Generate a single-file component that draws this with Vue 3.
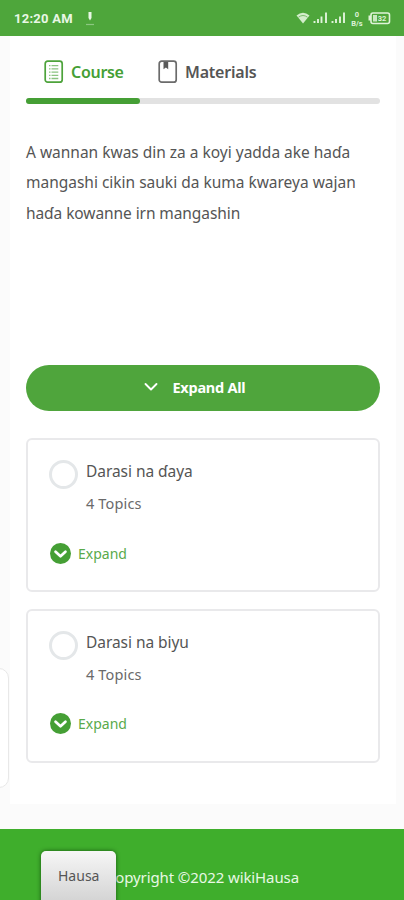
<script setup>
const description = [
  { text: 'A wannan ƙwas din za a koyi yadda ake haɗa', cls: 'l1' },
  { text: 'mangashi cikin sauki da kuma ƙwareya wajan', cls: 'l2' },
  { text: 'haɗa kowanne irn mangashin', cls: 'l3' },
]
const lessons = [
  { title: 'Darasi na ɗaya', topics: '4 Topics' },
  { title: 'Darasi na biyu', topics: '4 Topics' },
]
</script>

<template>
  <div class="screen">
    <header class="status">
      <span class="time">12:20 AM</span>
      <svg class="download" width="10" height="16" viewBox="0 0 10 16">
        <path d="M3.500 1h3v6L5 9.500 3.500 7z" fill="#e9f7e5" />
        <path d="M1 13.500h8" stroke="#8cc880" stroke-width="1.200" />
      </svg>
      <svg class="signals" width="98" height="20" viewBox="0 0 98 20">
        <path d="M.5 6.500Q7 1 13.500 6.500L7 14.500z" fill="#d3edcb" />
        <path d="M2.500 8.200Q7 4.800 11.500 8.200" fill="none" stroke="#6db65d" stroke-width=".9" />
        <path d="M18.500 14v-2M22 14v-4M25.500 14V7.500M30 14V3.500M36.500 14v-2M40 14v-4M44 14V7.500M48 14V3.500" stroke="#e0f3da" stroke-width="1.900" />
        <text x="61" y="7.500" class="tiny">0</text>
        <text x="61" y="16.500" class="tiny">B/s</text>
        <rect x="75" y="4" width="18.500" height="10.500" rx="2" fill="none" stroke="#dff3d8" stroke-width="1.600" />
        <path d="M75 6.500h-2.500v5H75z" fill="#dff3d8" />
        <rect x="77" y="6" width="4" height="6.500" fill="#c9e8bf" />
        <text x="86" y="12.200" class="tiny">32</text>
      </svg>
    </header>

    <div class="page">
      <div class="side-tab"></div>
      <main class="card">
        <nav class="tabs">
          <div class="tab active">
            <svg width="20" height="24" viewBox="0 0 20 24" fill="none">
              <rect x="1.200" y="1.200" width="17" height="21" rx="2.500" stroke="#4da33b" stroke-width="1.700" />
              <path d="M7.500 5.700h6.800M7.500 8.900h6.800M7.500 12.100h6.800M7.500 15.300h6.800M7.500 18.500h6.800" stroke="#8ac481" stroke-width="1.300" />
              <path d="M5 5.700h1.500M5 8.900h1.500M5 12.100h1.500M5 15.300h1.500M5 18.500h1.500" stroke="#8ac481" stroke-width="1.300" />
            </svg>
            <span class="course">Course</span>
          </div>
          <div class="tab">
            <svg width="20" height="24" viewBox="0 0 20 24" fill="none">
              <rect x="1.200" y="1.200" width="17" height="21" rx="2.500" stroke="#6b6b6b" stroke-width="1.700" />
              <path d="M5.500 2h4.700v7.300L7.900 7.500 5.500 9.300z" fill="#5a5a5a" />
            </svg>
            <span class="materials">Materials</span>
          </div>
        </nav>
        <div class="track"><div class="bar"></div></div>

        <p class="description">
          <span v-for="line in description" :key="line.cls" :class="line.cls">{{ line.text }}</span>
        </p>

        <button class="expand-all">
          <svg width="14" height="10" viewBox="0 0 14 10" fill="none">
            <path d="M1.500 2 7 7.500 12.500 2" stroke="#fff" stroke-width="1.900" stroke-linecap="round" stroke-linejoin="round" />
          </svg>
          <span>Expand All</span>
        </button>

        <section v-for="lesson in lessons" :key="lesson.title" class="lesson">
          <div class="lesson-head">
            <span class="ring"></span>
            <div class="info">
              <div class="title">{{ lesson.title }}</div>
              <div class="topics">{{ lesson.topics }}</div>
            </div>
          </div>
          <div class="expand">
            <svg width="21" height="21" viewBox="0 0 20 20">
              <circle cx="10" cy="10" r="10" fill="#459f35" />
              <path d="M5.300 8.300 10 12.600 14.700 8.300" fill="none" stroke="#fff" stroke-width="2.600" stroke-linecap="round" stroke-linejoin="round" />
            </svg>
            <span>Expand</span>
          </div>
        </section>
      </main>
    </div>

    <footer class="footer">
      <span class="copyright">Copyright ©2022 wikiHausa</span>
      <div class="language">Hausa</div>
    </footer>
  </div>
</template>

<style>
body { margin: 0; overflow: hidden; }
</style>

<style scoped>
.screen {
  width: 404px;
  height: 900px;
  overflow: hidden;
  display: flex;
  flex-direction: column;
  background: #fbfbfb;
  font-family: "Noto Sans", "Open Sans", sans-serif;
  color: #555;
}
.screen * { box-sizing: border-box; }
.status {
  height: 36px;
  flex: none;
  display: flex;
  align-items: center;
  background: #4ea63b;
  padding: 1px 10px 0 14px;
}
.time {
  width: 60px;
  color: #e9f7e5;
  font: 700 13px/20px Roboto, sans-serif;
  letter-spacing: .25px;
  white-space: nowrap;
}
.download { margin-left: 11px; }
.signals { margin-left: auto; flex: none; }
.tiny {
  font: 700 7.500px Roboto, sans-serif;
  fill: #dff3d8;
  text-anchor: middle;
}
.page {
  position: relative;
  height: 792.500px;
  flex: none;
  padding: 0 8px 0 10px;
}
.side-tab {
  position: absolute;
  left: -12px;
  top: 632px;
  width: 21px;
  height: 120px;
  border: 1.500px solid #e8e8e8;
  border-radius: 10px;
  background: #fff;
}
.card {
  height: 768px;
  width: 386px;
  background: #fff;
  padding: 24px 16px 0;
}
.tabs {
  display: flex;
  height: 24px;
  padding-left: 18px;
  gap: 33px;
}
.tab {
  display: flex;
  gap: 7px;
  font-size: 16px;
  font-weight: 600;
  line-height: 24px;
  white-space: nowrap;
}
.active { color: #459f35; }
.course { width: 54px; letter-spacing: -.3px; }
.materials { letter-spacing: -.2px; }
.track {
  margin-top: 14px;
  width: 354px;
  height: 6px;
  border-radius: 3px;
  background: #e2e2e2;
}
.bar {
  width: 114px;
  height: 6px;
  border-radius: 3px;
  background: #459f35;
}
.description {
  margin: 32.500px 0 0;
  height: 228.500px;
  font-size: 15.500px;
  line-height: 30.500px;
}
.description span { display: block; white-space: nowrap; }
.l1, .l2 { letter-spacing: -.01px; }
.l3 { letter-spacing: -.08px; }
.expand-all {
  display: flex;
  align-items: center;
  width: 354px;
  height: 46px;
  border: 0;
  border-radius: 23px;
  padding: 0 0 3px 118px;
  gap: 14.500px;
  background: #4fa53c;
  color: #fff;
  font: 700 14.500px "Noto Sans", sans-serif;
  letter-spacing: -.25px;
  margin-bottom: 27px;
}
.lesson {
  width: 354px;
  height: 154px;
  border: 2px solid #e9e9eb;
  border-radius: 6px;
  padding: 15px 21px 0;
  margin-bottom: 16.500px;
}
.lesson-head { display: flex; gap: 8px; height: 86px; }
.ring {
  width: 29px;
  height: 29px;
  margin-top: 5px;
  border: 3.500px solid #e4e7e9;
  border-radius: 50%;
}
.title { font-size: 15.500px; line-height: 32px; letter-spacing: -.05px; }
.topics { font-size: 14.500px; line-height: 32px; color: #6a6a6a; letter-spacing: .15px; }
.expand {
  display: flex;
  align-items: center;
  height: 24px;
  padding-left: 1px;
  gap: 7px;
  font-size: 14px;
  color: #59aa4b;
}
.footer {
  position: relative;
  height: 71.500px;
  flex: none;
  background: #3fae2c;
}
.copyright {
  display: block;
  padding: 36px 105px 0 0;
  text-align: right;
  white-space: nowrap;
  color: #e8f8e4;
  font-size: 15px;
  line-height: 24px;
  letter-spacing: -.1px;
}
.language {
  position: absolute;
  left: 41px;
  top: 22px;
  width: 75px;
  height: 60px;
  border-radius: 5px 5px 0 0;
  background: linear-gradient(#f6f6f6, #d4d4d4 50px);
  box-shadow: 0 0 4px rgba(0, 40, 0, .65);
  padding-left: 17px;
  font-size: 14px;
  line-height: 50px;
}
</style>
